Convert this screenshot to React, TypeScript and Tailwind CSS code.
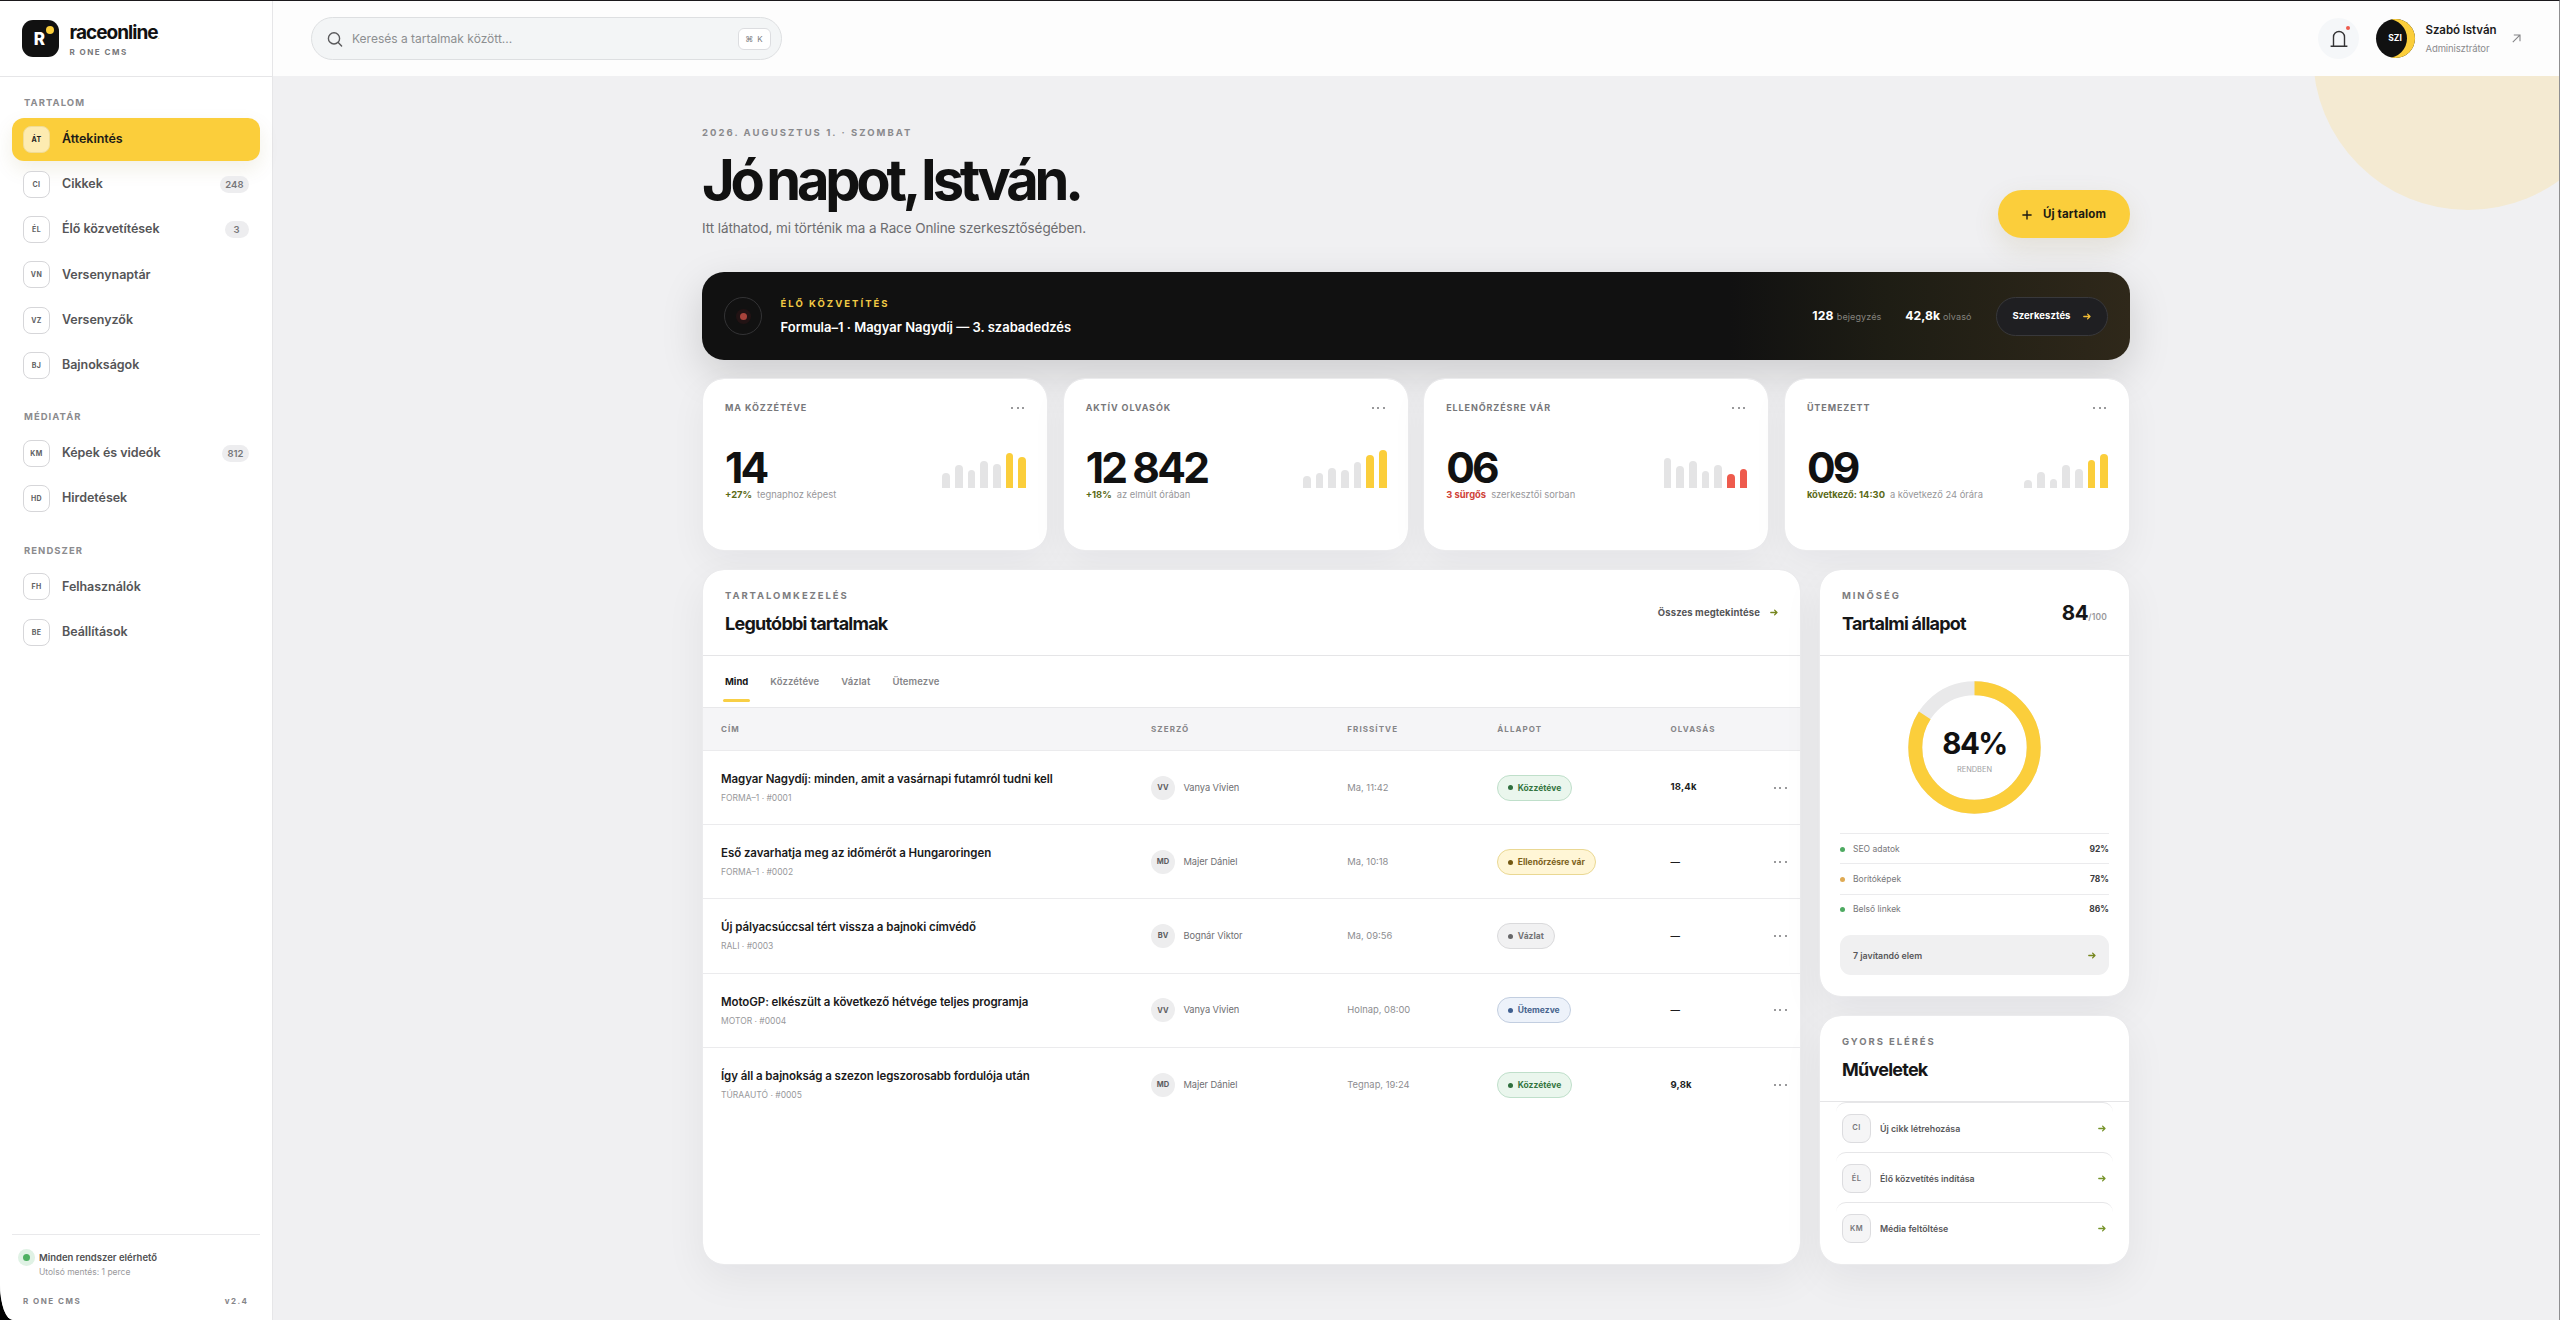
import type { ReactNode } from "react";
import clsx from "clsx";

interface NavItem {
  code: string;
  label: string;
  count?: string;
  active?: boolean;
}

const NAV: { title: string; items: NavItem[] }[] = [
  {
    title: "TARTALOM",
    items: [
      { code: "ÁT", label: "Áttekintés", active: true },
      { code: "CI", label: "Cikkek", count: "248" },
      { code: "ÉL", label: "Élő közvetítések", count: "3" },
      { code: "VN", label: "Versenynaptár" },
      { code: "VZ", label: "Versenyzők" },
      { code: "BJ", label: "Bajnokságok" },
    ],
  },
  {
    title: "MÉDIATÁR",
    items: [
      { code: "KM", label: "Képek és videók", count: "812" },
      { code: "HD", label: "Hirdetések" },
    ],
  },
  {
    title: "RENDSZER",
    items: [
      { code: "FH", label: "Felhasználók" },
      { code: "BE", label: "Beállítások" },
    ],
  },
];

const METRICS = [
  {
    label: "MA KÖZZÉTÉVE",
    value: "14",
    note: "+27%",
    text: "tegnaphoz képest",
    bars: [15, 22.5, 17.5, 27, 24, 34.5, 31],
  },
  {
    label: "AKTÍV OLVASÓK",
    value: "12 842",
    note: "+18%",
    text: "az elmúlt órában",
    bars: [11.5, 14.5, 20, 18, 25.5, 32.5, 38],
  },
  {
    label: "ELLENŐRZÉSRE VÁR",
    value: "06",
    note: "3 sürgős",
    text: "szerkesztői sorban",
    bars: [30, 22, 27, 17, 23, 13.5, 18.5],
    urgent: true,
  },
  {
    label: "ÜTEMEZETT",
    value: "09",
    note: "következő: 14:30",
    text: "a következő 24 órára",
    bars: [7.5, 16, 9, 23, 18.5, 28, 33.5],
  },
];

const STATUS_STYLES: Record<string, { label: string; className: string; dot: string }> = {
  published: {
    label: "Közzétéve",
    className: "bg-[#eaf6ed] border-[#bfdfca] text-[#34753f]",
    dot: "bg-[#2f6f3e]",
  },
  review: {
    label: "Ellenőrzésre vár",
    className: "bg-[#fff6d6] border-[#ead893] text-[#7c621c]",
    dot: "bg-[#735812]",
  },
  draft: {
    label: "Vázlat",
    className: "bg-[#f1f1f2] border-[#dadadc] text-[#747476]",
    dot: "bg-[#666668]",
  },
  scheduled: {
    label: "Ütemezve",
    className: "bg-[#edf2fa] border-[#c2cee0] text-[#48658f]",
    dot: "bg-[#3f5f90]",
  },
};

const ARTICLES = [
  { title: "Magyar Nagydíj: minden, amit a vasárnapi futamról tudni kell", meta: "FORMA–1 · #0001", initials: "VV", author: "Vanya Vivien", updated: "Ma, 11:42", status: "published", reads: "18,4k" },
  { title: "Eső zavarhatja meg az időmérőt a Hungaroringen", meta: "FORMA–1 · #0002", initials: "MD", author: "Majer Dániel", updated: "Ma, 10:18", status: "review", reads: "—" },
  { title: "Új pályacsúccsal tért vissza a bajnoki címvédő", meta: "RALI · #0003", initials: "BV", author: "Bognár Viktor", updated: "Ma, 09:56", status: "draft", reads: "—" },
  { title: "MotoGP: elkészült a következő hétvége teljes programja", meta: "MOTOR · #0004", initials: "VV", author: "Vanya Vivien", updated: "Holnap, 08:00", status: "scheduled", reads: "—" },
  { title: "Így áll a bajnokság a szezon legszorosabb fordulója után", meta: "TÚRAAUTÓ · #0005", initials: "MD", author: "Majer Dániel", updated: "Tegnap, 19:24", status: "published", reads: "9,8k" },
];

const QUALITY = [
  { label: "SEO adatok", value: "92%", dot: "bg-[#4eaa62]" },
  { label: "Borítóképek", value: "78%", dot: "bg-[#dfaa54]" },
  { label: "Belső linkek", value: "86%", dot: "bg-[#4eaa62]" },
];

const ACTIONS = [
  { code: "CI", label: "Új cikk létrehozása" },
  { code: "ÉL", label: "Élő közvetítés indítása" },
  { code: "KM", label: "Média feltöltése" },
];

const TABLE_GRID = "grid grid-cols-[430px_196.3px_150px_173.2px_1fr_auto] items-center pl-[18px] pr-[13.5px]";

function Arrow({ className }: { className?: string }) {
  return (
    <svg
      viewBox="0 0 8 7"
      className={clsx("w-2 h-[7px]", className)}
      fill="none"
      stroke="currentColor"
      strokeWidth="1.3"
      strokeLinecap="round"
      strokeLinejoin="round"
    >
      <path d="M0.8 3.5H7M4.6 1.1L7 3.5L4.6 5.9" />
    </svg>
  );
}

function Dots() {
  return (
    <span className="flex gap-[3.5px]">
      <i className="size-[2px] rounded-full bg-[#77777a]" />
      <i className="size-[2px] rounded-full bg-[#77777a]" />
      <i className="size-[2px] rounded-full bg-[#77777a]" />
    </span>
  );
}

function Sidebar() {
  return (
    <aside className="w-[272.5px] shrink-0 flex flex-col bg-white border-r border-[#e6e6e8]">
      <div className="h-[76px] shrink-0 flex items-center pl-[22px] border-b border-[#e6e6e8]">
        <div className="relative size-[37px] rounded-[11px] bg-[#111] flex items-center justify-center pr-0.5 pt-0.5">
          <span className="text-[17px] leading-none font-extrabold text-white">R</span>
          <i className="absolute right-[5px] top-[5.5px] size-2 rounded-full bg-[#fbce3b]" />
        </div>
        <div className="ml-[10.5px] pt-px">
          <p className="text-[19px] leading-none font-bold tracking-[-0.052em] text-[#111]">
            raceonline<span className="text-[#e9c96a] text-[8px]">.</span>
          </p>
          <p className="mt-[6px] text-[8px] leading-none font-bold tracking-[0.185em] text-[#77777a]">
            R ONE CMS
          </p>
        </div>
      </div>

      <nav className="px-3 pt-[21px]">
        {NAV.map((section) => (
          <section key={section.title} className="mb-[25.3px]">
            <h2 className="pl-3 mb-[9.5px] text-[9.5px] leading-[10px] font-bold tracking-[0.11em] text-[#8b8b8e]">
              {section.title}
            </h2>
            <div className="space-y-[1.7px]">
              {section.items.map((item) => (
                <a
                  key={item.code}
                  className={clsx(
                    "flex items-center h-[43.5px] px-[11px] rounded-xl",
                    item.active && "bg-[#fbce3b] shadow-[0_8px_20px_rgba(120,100,20,0.1)]"
                  )}
                >
                  <span
                    className={clsx(
                      "size-[27px] rounded-lg border flex items-center justify-center text-[7px] leading-none font-bold tracking-[0.05em]",
                      item.active
                        ? "bg-[#fdebb1] border-[#f0dc96] text-[#222]"
                        : "bg-white border-[#d6d6d9] text-[#616163]"
                    )}
                  >
                    {item.code}
                  </span>
                  <span
                    className={clsx(
                      "ml-[12px] text-[12.5px] leading-none font-semibold tracking-[-0.003em]",
                      item.active ? "text-[#1c1b17]" : "text-[#555557]"
                    )}
                  >
                    {item.label}
                  </span>
                  {item.count && (
                    <span className="ml-auto min-w-6 h-[17px] px-[5px] rounded-full bg-[#ededef] flex items-center justify-center text-[9.5px] leading-none font-semibold text-[#77777a]">
                      {item.count}
                    </span>
                  )}
                </a>
              ))}
            </div>
          </section>
        ))}
      </nav>

      <div className="mt-auto mx-3 h-[86px] shrink-0 border-t border-[#e9e9eb] pt-[17.5px]">
        <div className="flex pl-[11px]">
          <i className="mt-[1.5px] size-[7px] rounded-full bg-[#4eb062] ring-5 ring-[#e0f2e5]" />
          <div className="ml-[9px]">
            <p className="text-[9.5px] leading-[10px] font-semibold text-[#505052]">Minden rendszer elérhető</p>
            <p className="mt-[5.5px] text-[8.5px] leading-[9px] text-[#9a9a9d]">Utolsó mentés: 1 perce</p>
          </div>
        </div>
        <div className="mt-5 px-[11px] flex justify-between text-[8px] leading-none font-bold tracking-[0.185em] text-[#858588]">
          <span>R ONE CMS</span>
          <span>v2.4</span>
        </div>
      </div>
    </aside>
  );
}

function TopBar() {
  return (
    <header className="relative h-[75px] shrink-0 flex items-center pl-[38.5px] pr-[38px] bg-[#fdfdfd]">
      <div className="w-[471px] h-[43px] rounded-full border border-[#dddfe1] bg-[#f3f5f6] flex items-center pl-[15px] pr-[10.5px]">
        <svg
          viewBox="0 0 16 16"
          className="size-4"
          fill="none"
          stroke="#5a5a5c"
          strokeWidth="1.4"
          strokeLinecap="round"
        >
          <circle cx="7" cy="7.4" r="5.6" />
          <path d="M11.2 11.6L14.6 15" />
        </svg>
        <span className="ml-[9px] text-[12px] leading-none text-[#8d8f91]">
          Keresés a tartalmak között...
        </span>
        <kbd className="ml-auto w-[33px] h-[22px] rounded-md border border-[#dcdde0] bg-white flex items-center justify-center gap-1 font-[Inter] text-[8px] leading-none text-[#7b7b7e]">
          <span>⌘</span>
          <span>K</span>
        </kbd>
      </div>

      <div className="ml-auto relative size-[41px] rounded-full bg-[#f5f7f9] flex items-center justify-center">
        <svg viewBox="0 0 18 18" className="size-[18px]" fill="none" stroke="#333335" strokeWidth="1.4">
          <path d="M3.5 16V7a5.5 5.5 0 0 1 11 0v9M0.6 16.2H17.4" />
        </svg>
        <i className="absolute right-[9px] top-[8px] size-1 rounded-full bg-[#ee5b4d]" />
      </div>
      <div className="ml-[16.5px] size-[39px] rounded-full bg-[#111] shadow-[inset_-8px_0_0_#fbce3b] flex items-center justify-center text-[8.5px] leading-none font-bold text-white">
        SZI
      </div>
      <div className="ml-[11px] w-[72px] pt-px">
        <p className="text-[11.5px] leading-none font-semibold tracking-[-0.006em] whitespace-nowrap text-[#1b1b1c]">
          Szabó István
        </p>
        <p className="mt-[7.5px] text-[9.5px] leading-none tracking-[-0.012em] text-[#8b8b8e]">Adminisztrátor</p>
      </div>
      <svg viewBox="0 0 9 9" className="ml-[14.5px] size-[9px]" fill="none" stroke="#858588" strokeWidth="1.1">
        <path d="M0.8 8.2L7.8 1.2M1.8 1H8V7.2" />
      </svg>
    </header>
  );
}

function LiveBanner() {
  return (
    <section className="mt-[34px] h-[88px] rounded-[22px] bg-[linear-gradient(90deg,#111_0%,#111_72%,#1e1d14_83%,#2f281a_100%)] shadow-[0_14px_42px_rgba(0,0,0,0.15)] flex items-center pl-[22px] pr-[22.5px]">
      <div className="size-[38px] rounded-full border border-[#333335] flex items-center justify-center">
        <i className="size-[7px] rounded-full bg-[#a8433b] ring-4 ring-[#221314]" />
      </div>
      <div className="ml-[18.5px]">
        <p className="text-[9.5px] leading-[10px] font-bold tracking-[0.213em] text-[#f3cb45]">ÉLŐ KÖZVETÍTÉS</p>
        <p className="mt-[12px] text-[13px] leading-[13px] font-semibold text-white">
          Formula–1 · Magyar Nagydíj — 3. szabadedzés
        </p>
      </div>
      <div className="ml-auto flex items-center">
        <p className="flex items-baseline gap-[3px]">
          <b className="text-[12.2px] leading-none font-bold tracking-[0.02em] text-white">128</b>
          <span className="text-[9px] leading-none tracking-[0.012em] text-[#85837e]">bejegyzés</span>
        </p>
        <p className="ml-[24px] flex items-baseline gap-[3px]">
          <b className="text-[12.2px] leading-none font-bold text-white">42,8k</b>
          <span className="text-[9px] leading-none tracking-[0.012em] text-[#85837e]">olvasó</span>
        </p>
        <button className="ml-6 w-[112px] h-[39px] rounded-full border border-[#38383b] bg-[#1f1f22] flex items-center justify-center gap-3 text-[9.5px] leading-none font-bold tracking-[0.008em] text-white">
          Szerkesztés
          <Arrow className="text-[#f3bd35]" />
        </button>
      </div>
    </section>
  );
}

function MetricCard({ metric }: { metric: (typeof METRICS)[number] }) {
  const accent = metric.urgent ? "bg-[#ee5b4d]" : "bg-[#fbce3b]";
  return (
    <div className="h-[173px] rounded-[22px] border border-[#ebebed] bg-white bg-clip-padding shadow-[0_12px_36px_rgba(20,20,30,0.05)] pl-[22px] pr-[21px] pt-[24px]">
      <div className="flex items-center justify-between pr-[2px]">
        <h3 className="text-[9px] leading-[10px] font-bold tracking-[0.1em] text-[#77777a]">{metric.label}</h3>
        <Dots />
      </div>
      <div className="mt-[34px] flex items-end justify-between">
        <p className="text-[42.5px] leading-[42px] font-bold tracking-[-0.066em] text-[#111]">{metric.value}</p>
        <div className="flex items-end gap-[5px] pb-[1.5px]">
          {metric.bars.map((height, i) => (
            <i
              key={i}
              className={clsx("w-[7.7px] rounded-t-full", i > 4 ? accent : "bg-[#e4e4e5]")}
              style={{ height }}
            />
          ))}
        </div>
      </div>
      <p className="mt-[0.5px] text-[9.4px] leading-[10px] text-[#97979a]">
        <b className={clsx("mr-[5px] font-bold", metric.urgent ? "text-[#cf4238]" : "text-[#5b6a16]")}>
          {metric.note}
        </b>
        {metric.text}
      </p>
    </div>
  );
}

function Panel({ className, children }: { className?: string; children: ReactNode }) {
  return (
    <section
      className={clsx(
        "rounded-[22px] border border-[#ebebed] bg-white bg-clip-padding shadow-[0_14px_42px_rgba(20,20,30,0.06)] overflow-hidden",
        className
      )}
    >
      {children}
    </section>
  );
}

function PanelHead({ label, title, children }: { label: string; title: string; children?: ReactNode }) {
  return (
    <div className="h-[86px] flex justify-between border-b border-[#e5e5e7] px-[22px] pt-[20.5px]">
      <div>
        <p className="text-[9.5px] leading-[10px] font-bold tracking-[0.203em] text-[#7d7d80]">{label}</p>
        <h2 className="mt-[14.5px] text-[18px] leading-[18px] font-bold tracking-[-0.042em] text-[#161617]">{title}</h2>
      </div>
      {children}
    </div>
  );
}

function ArticlesPanel() {
  return (
    <Panel>
      <PanelHead label="TARTALOMKEZELÉS" title="Legutóbbi tartalmak">
        <a className="h-[44.5px] flex items-center gap-[10px] text-[9.5px] leading-none font-bold tracking-[0.013em] text-[#555557]">
          Összes megtekintése
          <Arrow className="text-[#76861e]" />
        </a>
      </PanelHead>

      <div className="h-[51.5px] flex gap-[18px] pl-5 border-b border-[#e8e8ea] text-[9.5px] font-semibold">
        <span className="relative px-[2px] leading-[52px] font-bold text-[#161617]">
          Mind
          <i className="absolute inset-x-0 bottom-[5px] h-[3px] rounded-full bg-[#f8cf45]" />
        </span>
        <span className="px-[2px] leading-[52px] tracking-[0.012em] text-[#858588]">Közzétéve</span>
        <span className="px-[2px] leading-[52px] tracking-[0.012em] text-[#858588]">Vázlat</span>
        <span className="px-[2px] leading-[52px] tracking-[0.012em] text-[#858588]">Ütemezve</span>
      </div>

      <div
        className={clsx(
          TABLE_GRID,
          "h-[43.5px] bg-[#f5f5f7] border-b border-[#ebebed] text-[8px] font-bold tracking-[0.135em] text-[#858588]"
        )}
      >
        <span>CÍM</span>
        <span>SZERZŐ</span>
        <span>FRISSÍTVE</span>
        <span>ÁLLAPOT</span>
        <span>OLVASÁS</span>
      </div>

      {ARTICLES.map((article) => {
        const status = STATUS_STYLES[article.status];
        return (
          <div key={article.meta} className={clsx(TABLE_GRID, "h-[74.2px] border-b border-[#ebebed] last:border-0")}>
            <div className="pt-px">
              <p className="text-[11.5px] leading-[12px] font-semibold tracking-[-0.006em] text-[#1a1a1b]">
                {article.title}
              </p>
              <p className="mt-[9px] text-[8.5px] leading-[9px] text-[#98989b]">{article.meta}</p>
            </div>
            <div className="flex items-center">
              <span className="size-6 rounded-full bg-[#ededee] flex items-center justify-center text-[7.5px] font-bold text-[#5c5c5e]">
                {article.initials}
              </span>
              <span className="ml-[8.5px] text-[9.3px] tracking-[-0.008em] text-[#6f6f72]">{article.author}</span>
            </div>
            <span className="text-[9.4px] text-[#8d8d90]">{article.updated}</span>
            <div>
              <span
                className={clsx(
                  "inline-flex items-center h-[26px] gap-[5px] pl-[9.5px] pr-[10px] rounded-full border align-middle text-[8.5px] leading-none font-bold",
                  status.className
                )}
              >
                <i className={clsx("size-[5px] rounded-full", status.dot)} />
                {status.label}
              </span>
            </div>
            <span className="text-[9.5px] font-bold tracking-[0.02em] text-[#1d1d1e]">{article.reads}</span>
            <Dots />
          </div>
        );
      })}
    </Panel>
  );
}

function QualityPanel() {
  // arc length of the ring at r = 59.25
  const ring = 2 * Math.PI * 59.25;
  return (
    <Panel className="h-[428px]">
      <PanelHead label="MINŐSÉG" title="Tartalmi állapot">
        <p className="h-[45px] flex items-center">
          <span className="flex items-baseline">
            <b className="text-[20.5px] leading-none font-bold tracking-[-0.015em] text-[#161617]">84</b>
            <span className="text-[8.5px] leading-none font-semibold tracking-[0.018em] text-[#98989b]">/100</span>
          </span>
        </p>
      </PanelHead>
      <div className="px-5">
        <div className="relative mt-[24.5px] mx-auto size-[133px]">
          <svg viewBox="0 0 133 133" className="size-full -rotate-90" fill="none" strokeWidth="14">
            <circle cx="66.5" cy="66.5" r="59.25" stroke="#e9e9ea" />
            <circle
              cx="66.5"
              cy="66.5"
              r="59.25"
              stroke="#fbce3b"
              strokeDasharray={`${ring * 0.84} ${ring}`}
            />
          </svg>
          <div className="absolute inset-0 flex flex-col items-center pt-[47.5px]">
            <b className="text-[29.5px] leading-[30px] font-bold tracking-[-0.05em] text-[#111]">84%</b>
            <span className="mt-[8px] text-[7.4px] leading-[8px] text-[#a0a0a3]">RENDBEN</span>
          </div>
        </div>
        <div className="mt-[19.5px]">
          {QUALITY.map((row) => (
            <div key={row.label} className="h-[30.3px] flex items-center pt-px border-t border-[#ebebed]">
              <i className={clsx("size-[5px] rounded-full", row.dot)} />
              <span className="ml-2 text-[8.5px] text-[#77777a]">{row.label}</span>
              <b className="ml-auto text-[8.5px] font-bold text-[#3b3b3d]">{row.value}</b>
            </div>
          ))}
        </div>
        <button className="mt-[11.5px] w-full h-[40px] rounded-[11px] bg-[#f0f0f1] flex items-center justify-between px-[13px] text-[8.8px] font-semibold text-[#58585a]">
          7 javítandó elem
          <Arrow className="text-[#76861e]" />
        </button>
      </div>
    </Panel>
  );
}

function ActionsPanel() {
  return (
    <Panel className="h-[250px]">
      <PanelHead label="GYORS ELÉRÉS" title="Műveletek" />
      <div className="px-4">
        {ACTIONS.map((action) => (
          <a
            key={action.code}
            className="h-[50.2px] flex items-center pt-px rounded-[10px] border-t border-[#e6e6e8] pl-[6px] pr-[7px]"
          >
            <span className="size-[29px] rounded-[9px] border border-[#dcdcdf] bg-[#f5f5f6] flex items-center justify-center text-[7.5px] font-semibold tracking-[0.05em] text-[#77777a]">
              {action.code}
            </span>
            <span className="ml-[9px] text-[8.8px] font-semibold text-[#58585a]">{action.label}</span>
            <Arrow className="ml-auto text-[#76932a]" />
          </a>
        ))}
      </div>
    </Panel>
  );
}

export default function App() {
  return (
    <div className="h-[1320px] w-[2560px] bg-black overflow-hidden font-[Inter,'Noto_Sans',sans-serif] antialiased">
      <div className="h-full flex bg-[#f0f0f2] border-t border-t-[#1b191c] border-r border-r-[#8f8f91] overflow-hidden [border-bottom-left-radius:13px_36px]">
        <Sidebar />
        <div className="relative flex-1 min-w-0 flex flex-col">
          <i className="absolute left-[2040.5px] -top-[101px] size-[310px] rounded-full bg-[#f4ead2]" />
          <TopBar />
          <main className="relative w-[1428px] ml-[429.5px] pt-[52px]">
            <div className="flex items-end justify-between">
              <div className="pb-[3px]">
                <p className="text-[9.5px] leading-[10px] font-bold tracking-[0.214em] text-[#8a8a8d]">
                  2026. AUGUSZTUS 1. · SZOMBAT
                </p>
                <h1 className="mt-[14px] text-[56px] leading-[56px] font-bold tracking-[-0.075em] [word-spacing:-3.5px] text-[#111]">
                  Jó napot, István.
                </h1>
                <p className="mt-[13px] text-[13.5px] leading-[14px] tracking-[-0.007em] text-[#6c6c6f]">
                  Itt láthatod, mi történik ma a Race Online szerkesztőségében.
                </p>
              </div>
              <button className="w-[132px] h-[48px] rounded-full bg-[#fbce3b] shadow-[0_10px_28px_rgba(120,100,20,0.12)] flex items-center justify-center gap-[11px] pt-px text-[11.5px] leading-none font-bold tracking-[0.011em] text-[#1c1a12]">
                <svg viewBox="0 0 10 10" className="size-[10px]" stroke="currentColor" strokeWidth="1.4">
                  <path d="M5 0.4V9.6M0.4 5H9.6" />
                </svg>
                Új tartalom
              </button>
            </div>

            <LiveBanner />

            <div className="mt-[18px] grid grid-cols-4 gap-[14.5px]">
              {METRICS.map((metric) => (
                <MetricCard key={metric.label} metric={metric} />
              ))}
            </div>

            <div className="mt-[18px] h-[696px] grid grid-cols-[1099px_311px] gap-[18px]">
              <ArticlesPanel />
              <div className="flex flex-col gap-[18px]">
                <QualityPanel />
                <ActionsPanel />
              </div>
            </div>
          </main>
        </div>
      </div>
    </div>
  );
}
